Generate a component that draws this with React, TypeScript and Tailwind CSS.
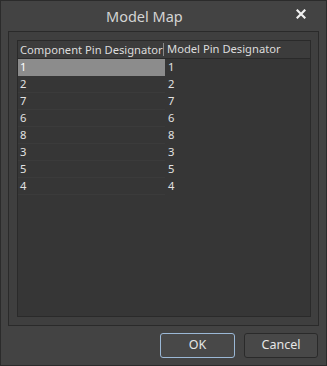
const pins = ['1', '2', '7', '6', '8', '3', '5', '4'];

export default function App() {
  return (
    <div
      className="w-[327px] h-[366px] bg-[#434343] border border-[#2b2b2b] flex flex-col text-[#e2e2e2]"
      style={{ fontFamily: '"Noto Sans", "Open Sans", sans-serif' }}
    >
      {/* title bar */}
      <div className="relative h-[30px] flex items-center pl-[105px]">
        <span className="text-[14.5px] text-[#d4d4d4] mt-[1px]">Model Map</span>
        <svg className="absolute right-[20px] top-[8px]" width="10" height="10" viewBox="0 0 10 10">
          <path d="M1.5 1.5 L8.5 8.5 M8.5 1.5 L1.5 8.5" stroke="#f0f0f0" strokeWidth="2.2" strokeLinecap="square" />
        </svg>
      </div>

      {/* group frame */}
      <div className="mx-[7px] h-[295px] border border-[#2a2a2a] bg-[#3f3f3f] pl-[8px] pr-[7px] pt-[8px] pb-[8px] flex">
        <div className="flex-1 border border-[#2a2a2a] bg-[#363636] flex flex-col text-[11.2px]">
          <div className="h-[18px] flex items-center bg-[#3c3c3c] border-b border-[#2a2a2a] text-[#dcdcdc]">
            <div className="w-[146px] pl-[2px] border-r border-[#8a8a8a] leading-[13px] whitespace-nowrap">
              Component Pin Designator
            </div>
            <div className="pl-[3px] whitespace-nowrap">Model Pin Designator</div>
          </div>
          {pins.map((p, i) => (
            <div key={p} className="h-[17px] flex items-center">
              <div
                className={
                  i === 0
                    ? 'w-[147px] h-full flex items-center pl-[2px] bg-[#8c8c8c] text-white'
                    : 'w-[147px] h-full flex items-center pl-[2px] border-b border-[#3b3b3b]'
                }
              >
                {p}
              </div>
              <div className="pl-[3px]">{p}</div>
            </div>
          ))}
        </div>
      </div>

      {/* buttons */}
      <div className="flex justify-end gap-[9px] pr-[8px] mt-[7px]">
        <button className="w-[75px] h-[25px] rounded-[3px] border border-[#9bb8d6] bg-[#484848] text-[12.5px] text-[#e6e6e6]">
          OK
        </button>
        <button className="w-[74px] h-[25px] rounded-[3px] border border-[#2a2a2a] bg-[#484848] text-[12.5px] text-[#e6e6e6]">
          Cancel
        </button>
      </div>
    </div>
  );
}
